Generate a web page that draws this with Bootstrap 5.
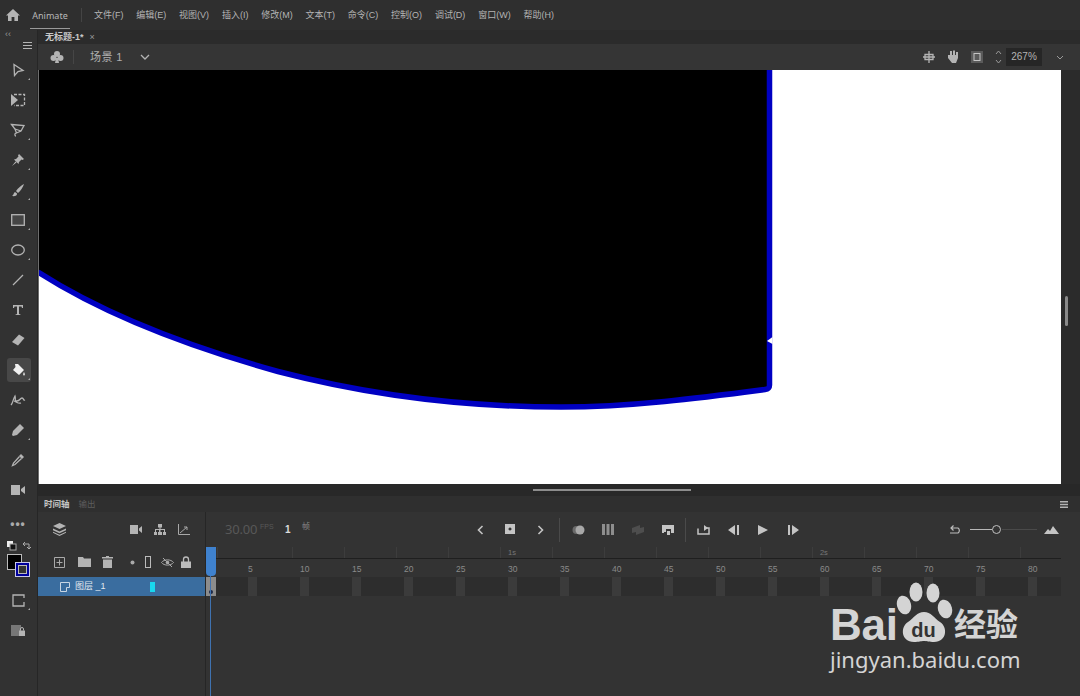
<!DOCTYPE html>
<html lang="zh-CN">
<head>
<meta charset="UTF-8">
<title>Animate</title>
<link href="https://cdn.jsdelivr.net/npm/bootstrap@5.3.3/dist/css/bootstrap.min.css" rel="stylesheet">
<style>
  html, body { height: 100%; }
  body {
    width: 1080px; height: 696px; overflow: hidden; background: #2e2e2e; color: #bdbdbd;
    font-family: "Liberation Sans", "Noto Sans CJK SC", sans-serif; font-size: 10px; line-height: 1;
  }
  svg { display: block; }
  .ico { fill: #b4b4b4; stroke: none; }
  .ico-line { fill: none; stroke: #b4b4b4; stroke-width: 1.3; }

  /* top menu */
  .menu-bar { height: 30px; background: #2f2f2f; padding-left: 5px; flex: none; }
  .app-name { width: 40px; height: 28px; margin: 0 0 0 9px; line-height: 29px; text-align: center; border-bottom: 1px solid #9a9a9a; font-family: "Noto Sans", sans-serif; font-size: 9px; color: #b8b8b8; }
  .menu-sep { width: 1px; height: 14px; background: #444; margin: 0 12px 0 11px; }
  .menu-items { gap: 12.8px; color: #b4b4b4; font-size: 9px; }

  /* left tools */
  .tool-strip { width: 38px; flex: none; background: #323232; border-right: 1px solid #262626; }
  .tool-head { height: 25px; padding: 0 5px; }
  .tool-dots { color: #999; font-size: 9px; }
  .tool-menu { margin-top: 12px; }
  .tool-btn { width: 26px; height: 30px; margin-left: 5px; position: relative; }
  .tool-btn.on::before { content: ""; position: absolute; left: 2px; right: 0; top: 3px; bottom: 3px; border-radius: 3px; background: #484848; }
  .tool-btn svg { position: relative; }
  .tool-btn.more::after { content: ""; position: absolute; right: 1px; bottom: 5px; border: 1.5px solid transparent; border-right-color: #aaa; border-bottom-color: #aaa; }
  .tool-dotrow { color: #aaa; font-size: 12px; font-weight: bold; letter-spacing: 1px; }
  .color-box { width: 32px; height: 44px; margin: 2px 0 0 3px; position: relative; }
  .default-ico { position: absolute; left: 4px; top: 0; }
  .swap-ico { position: absolute; left: 19px; top: 0; }
  .swatch-fill { position: absolute; left: 4px; top: 13px; width: 15px; height: 16px; background: #000; border: 1px solid #bbb; }
  .swatch-stroke { position: absolute; left: 12px; top: 21px; width: 15px; height: 15px; background: #00009c; border: 1px solid #c8c8e8; padding: 2px; }
  .swatch-stroke span { display: block; height: 100%; background: #333; border: 1px solid #bbb; }

  /* tabs + stage bar */
  .work-col { min-width: 0; }
  .tab-row { height: 14px; background: #2b2b2b; padding-left: 7px; color: #c8c8c8; font-size: 9px; font-weight: bold; }
  .tab-x { margin-left: 6px; color: #999; font-weight: normal; }
  .stage-bar { height: 26px; background: #353535; padding-left: 12px; }
  .scene-sep { width: 1px; height: 14px; background: #464646; margin: 0 16px 0 9px; }
  .scene-name { font-size: 11px; color: #b0b0b0; width: 50px; letter-spacing: .4px; }
  .zoom-box { width: 36px; height: 18px; background: #262626; color: #b4b4b4; text-align: center; line-height: 18px; margin-left: 4px; }
  .bar-slot { width: 24px; }
  .zoom-arrows { margin-left: 6px; }
  .zoom-more { margin: 0 16px 0 14px; }

  /* stage */
  .stage-wrap { height: 414px; }
  .stage-art { width: 1023px; height: 414px; background: #fff; }
  .stage-gutter { width: 19px; background: #2b2b2b; padding: 226px 0 0 4px; }
  .stage-thumb { width: 3px; height: 30px; background: #8a8a8a; border-radius: 2px; }

  /* timeline */
  .grip-row { height: 12px; background: #282828; padding-top: 5px; }
  .grip-pill { width: 158px; height: 2px; background: #8d8d8d; margin-left: 495px; }
  .tl-tabs { height: 16px; background: #2f2f2f; padding: 0 12px 0 6px; font-size: 8.5px; color: #c4c4c4; font-weight: bold; }
  .tl-tabs .off { color: #5d5d5d; margin-left: 9px; font-weight: normal; }
  .tl-body { flex: 1; background: #333; position: relative; }
  .layers-pane { width: 168px; border-right: 1px solid #262626; flex: none; }
  .pane-top { height: 35px; padding: 0 9px 0 15px; }
  .pane-tools { height: 30px; padding-left: 16px; }
  .slot { width: 24px; }
  .slot-a { width: 19px; }
  .slot-b { width: 16px; }
  .slot-c { width: 20px; }
  .layer-row { height: 19px; background: #3a6d9f; color: #e2e8ee; padding-left: 22px; font-size: 9px; }
  .layer-ico { margin-right: 5px; }
  .layer-mark { width: 5px; height: 10px; background: #19d8ef; margin-left: 44px; }
  .tl-main { flex: 1; min-width: 0; }
  .ctl-row { height: 35px; padding-right: 21px; }
  .fps-num { width: 35px; margin-left: 19px; color: #585858; font-size: 13px; letter-spacing: -.2px; font-family: "Noto Sans", sans-serif; }
  .fps-unit { width: 25px; color: #585858; font-size: 7px; padding-bottom: 6px; }
  .frame-no { width: 17px; color: #dcdcdc; font-weight: bold; font-size: 10px; }
  .frame-unit { width: 163px; font-size: 8px; color: #888; padding-bottom: 6px; }
  .ctl-btn { width: 30px; }
  .ctl-sep { width: 1px; height: 24px; background: #4a4a4a; margin: 0 3px 0 4px; }
  .ctl-sep.two { margin: 0 2px 0 2px; }
  .zoom-track { width: 67px; height: 10px; position: relative; margin: 0 7px 0 8px; }
  .zoom-track::before { content: ""; position: absolute; left: 0; top: 4px; width: 22px; height: 1px; background: #b8b8b8; }
  .zoom-track::after { content: ""; position: absolute; left: 32px; top: 4px; width: 35px; height: 1px; background: #4a4a4a; }
  .zoom-knob { position: absolute; left: 22px; top: 0; width: 9px; height: 9px; border: 1.5px solid #c0c0c0; border-radius: 50%; }

  .ruler-sec { height: 11px; margin-right: 19px; padding-left: 302px; color: #777; font-size: 7.5px; gap: 304px; background: repeating-linear-gradient(90deg, transparent 0 51px, #3d3d3d 51px 52px); background-position: 35px 0; }
  .ruler-frames { height: 19px; margin-right: 19px; border-top: 1px solid #1f1f1f; padding: 6px 0 0 42px; color: #8a8a8a; font-size: 8.5px; overflow: hidden; }
  .ruler-frames span, .track-cell { width: 52px; flex: none; }
  .track { height: 19px; margin-right: 19px; background: #2d2d2d; overflow: hidden; }
  .track-first { width: 10px; background: #8c8c8c; flex: none; position: relative; }
  .track-first::after { content: ""; position: absolute; left: 3px; bottom: 2px; width: 4px; height: 4px; border-radius: 50%; background: #1c2a4a; }
  .track-gap { width: 32px; flex: none; }
  .track-key { display: block; width: 9px; height: 100%; background: #3b3b3b; }

  /* playhead lies over the ruler and the track */
  .play-flag { position: absolute; left: 168px; top: 35px; width: 10px; height: 29px; background: #3f82cf; border-radius: 0 0 4px 4px; }
  .play-line { position: absolute; left: 172px; top: 64px; bottom: 0; width: 1px; background: #3f72b0; }

  /* watermark */
  .mark-wrap { position: absolute; left: 830px; top: 581px; width: 195px; color: #d4d4d4; }
  .mark-top { height: 67px; }
  .mark-bai { font-size: 44px; font-weight: bold; line-height: 40px; margin-top: 24px; letter-spacing: -.2px; width: 66px; }
  .mark-logo { flex: none; margin-left: -1px; }
  .mark-zh { font-family: "Noto Sans CJK SC", sans-serif; font-size: 32px; font-weight: bold; line-height: 1; margin: 25px 0 0 1px; white-space: nowrap; }
  .mark-url { font-family: "Noto Sans", sans-serif; font-size: 22px; line-height: 1; white-space: nowrap; }
</style>
</head>
<body class="d-flex flex-column">

  <!-- menu -->
  <div class="menu-bar d-flex align-items-center">
    <svg width="16" height="14" viewBox="0 0 16 14" class="ico"><path d="M8 1 1 7.500h2V13h3.600V9h2.800v4H13V7.500h2z"/></svg>
    <div class="app-name">Animate</div>
    <div class="menu-sep"></div>
    <div class="d-flex menu-items">
      <span>文件(F)</span><span>编辑(E)</span><span>视图(V)</span><span>插入(I)</span><span>修改(M)</span><span>文本(T)</span><span>命令(C)</span><span>控制(O)</span><span>调试(D)</span><span>窗口(W)</span><span>帮助(H)</span>
    </div>
  </div>

  <div class="d-flex flex-grow-1">
    <!-- tools -->
    <div class="tool-strip">
      <div class="tool-head d-flex justify-content-between">
        <span class="tool-dots">‹‹</span>
        <svg class="ico tool-menu" width="9" height="7" viewBox="0 0 9 7"><path d="M0 0h9v1H0zM0 3h9v1H0zM0 6h9v1H0z"/></svg>
      </div>
      <div class="tool-btn more d-flex align-items-center justify-content-center"><svg width="14" height="14" viewBox="0 0 14 14" class="ico-line"><path d="M3 1.500 12 7.500 7 8.500 3.500 12.500z"/></svg></div>
      <div class="tool-btn d-flex align-items-center justify-content-center"><svg width="16" height="14" viewBox="0 0 16 14"><path class="ico-line" stroke-dasharray="3 1.500" d="M4 1.500h10.500v11H4"/><path class="ico" d="M1 1 8 7 1 13z"/></svg></div>
      <div class="tool-btn more d-flex align-items-center justify-content-center"><svg width="16" height="16" viewBox="0 0 16 16" class="ico-line"><path d="M1.500 2.500 14 3.500 11 9 6.500 11 5 7z"/><path d="M5 7 11 9M6 11c-2 1-1 3 0 3"/></svg></div>
      <div class="tool-btn more d-flex align-items-center justify-content-center"><svg width="14" height="14" viewBox="0 0 14 14" class="ico"><path d="M8 1 13 6 11.500 7 10.500 6.500 8 9 7.500 11 3 6.500 5 6 7.500 3.500 7 2.500zM4.500 8.500 1 13 5.500 9.500z"/></svg></div>
      <div class="tool-btn more d-flex align-items-center justify-content-center"><svg width="14" height="14" viewBox="0 0 14 14" class="ico"><path d="M13 1C11 2 7 5 5 8L7 10C9.500 8 12 4 13 1zM4 9C2.500 9.500 3 12 1 13 4 13.500 6.500 12.500 6 10.500z"/></svg></div>
      <div class="tool-btn more d-flex align-items-center justify-content-center"><svg width="14" height="12" viewBox="0 0 14 12"><rect class="ico-line" x=".7" y=".7" width="12.600" height="10.600" style="fill:#454545"/></svg></div>
      <div class="tool-btn more d-flex align-items-center justify-content-center"><svg width="14" height="12" viewBox="0 0 14 12"><ellipse class="ico-line" cx="7" cy="6" rx="6.300" ry="5"/></svg></div>
      <div class="tool-btn d-flex align-items-center justify-content-center"><svg width="12" height="12" viewBox="0 0 12 12" class="ico-line"><path d="M1 11 11 1"/></svg></div>
      <div class="tool-btn d-flex align-items-center justify-content-center"><svg width="12" height="12" viewBox="0 0 12 12" class="ico"><path d="M1 1h10v3h-1L9.500 2.500H7V10l1.500.5V11h-5v-.5L5 10V2.500H2.500L2 4H1z"/></svg></div>
      <div class="tool-btn d-flex align-items-center justify-content-center"><svg width="14" height="12" viewBox="0 0 14 12" class="ico"><path d="M8 .5 13.500 4 7 11.500 1 8z"/></svg></div>
      <div class="tool-btn on more d-flex align-items-center justify-content-center"><svg width="15" height="15" viewBox="0 0 15 15"><path fill="#f0f0f0" d="M4 1h3l6 6-5 5-6-5 2.500-3z"/><path fill="#f0f0f0" d="M13 9c1 1.500 1.200 3.500 0 3.500s-1-2 0-3.500z"/></svg></div>
      <div class="tool-btn d-flex align-items-center justify-content-center"><svg width="16" height="12" viewBox="0 0 16 12" class="ico-line"><path d="M1 11C3 9 3 5 5 2 6 5 4 7 7 7s3-3 5-3 1 3 3 2M4 7c3 1 4 3 7 2"/></svg></div>
      <div class="tool-btn more d-flex align-items-center justify-content-center"><svg width="14" height="14" viewBox="0 0 14 14" class="ico"><path d="M9 1 13 5 6 12 2 13 1 12 2 8z"/></svg></div>
      <div class="tool-btn d-flex align-items-center justify-content-center"><svg width="14" height="14" viewBox="0 0 14 14"><path class="ico" d="M10 1 13 4 11 6 8 3z"/><path class="ico-line" d="M8.500 3.500 2.500 10 1.500 12.500 4 11.500 10.500 5.500"/></svg></div>
      <div class="tool-btn d-flex align-items-center justify-content-center"><svg width="14" height="10" viewBox="0 0 14 10" class="ico"><path d="M0 0h9v10H0zM10 4l4-3v8l-4-3z"/></svg></div>
      <div class="tool-btn tool-dotrow d-flex align-items-center justify-content-center mt-1">•••</div>
      <div class="color-box">
        <svg class="default-ico" width="10" height="10" viewBox="0 0 10 10"><rect width="6" height="6" fill="#eee"/><rect x="3" y="3" width="6" height="6" fill="#111" stroke="#aaa"/></svg>
        <svg class="swap-ico" width="10" height="10" viewBox="0 0 10 10"><path d="M1 3h6v5M5 6l2 2 2-2M3 1 1 3l2 2" fill="none" stroke="#aaa"/></svg>
        <div class="swatch-fill"></div>
        <div class="swatch-stroke"><span></span></div>
      </div>
      <div class="tool-btn more d-flex align-items-center justify-content-center"><svg width="13" height="13" viewBox="0 0 13 13" class="ico-line"><path d="M12 4V1H1v11h11V8"/></svg></div>
      <div class="tool-btn d-flex align-items-center justify-content-center"><svg width="16" height="13" viewBox="0 0 16 13"><rect x="1" y="1" width="10" height="11" fill="#777"/><rect class="ico" x="9" y="6.500" width="6" height="5.500"/><path d="M10.500 6.500V5a1.500 1.500 0 0 1 3 0v1.500" fill="none" stroke="#b4b4b4"/></svg></div>
    </div>

    <div class="work-col flex-grow-1 d-flex flex-column">
      <div class="tab-row d-flex align-items-center"><span>无标题-1*</span><span class="tab-x">×</span></div>

      <div class="stage-bar d-flex align-items-center">
        <svg width="14" height="14" viewBox="0 0 14 14" class="ico"><circle cx="7" cy="4" r="3"/><circle cx="3.500" cy="8" r="3"/><circle cx="10.500" cy="8" r="3"/><path d="M6 8h2l1 5H5z"/></svg>
        <div class="scene-sep"></div>
        <span class="scene-name">场景 1</span>
        <svg width="10" height="6" viewBox="0 0 10 6" class="ico-line"><path d="M1 1 5 5 9 1"/></svg>
        <div class="ms-auto d-flex align-items-center">
          <div class="bar-slot"><svg width="12" height="12" viewBox="0 0 12 12" class="ico-line mx-auto"><path d="M6 0v12M2 3.500h8v5H2zM0 6h12"/></svg></div>
          <div class="bar-slot"><svg width="13" height="14" viewBox="0 0 13 14" class="ico mx-auto"><path d="M3 1h2v4h1V.5h2V5h1V2h2v6l-2 5H5L1 8V5h2z"/></svg></div>
          <div class="bar-slot"><svg width="12" height="12" viewBox="0 0 12 12" class="mx-auto"><rect width="12" height="12" fill="#5a5a5a"/><rect x="3" y="2.500" width="6" height="7" fill="none" stroke="#c4c4c4"/></svg></div>
          <svg class="zoom-arrows" width="7" height="16" viewBox="0 0 7 16"><path d="M1 5 3.500 2 6 5M1 11l2.500 3L6 11" fill="none" stroke="#999"/></svg>
          <div class="zoom-box">267%</div>
          <svg class="zoom-more" width="8" height="5" viewBox="0 0 8 5"><path d="M1 1 4 4 7 1" fill="none" stroke="#999"/></svg>
        </div>
      </div>

      <!-- stage -->
      <div class="stage-wrap d-flex">
        <div class="stage-art">
          <svg width="1023" height="414" viewBox="38 70 1023 414">
            <path fill="#000" d="M38 70H769V389H765C700 398 630 407 561 407 470 407 372 396 278 371.500 190 347 105 315 38 272z"/>
            <path fill="none" stroke="#0000c2" stroke-width="5.500" d="M38 272C105 315 190 347 278 371.500 372 396 470 407 561 407 630 407 700 398 765 389.500 768.500 389 769.500 388 769.500 385V70"/>
            <path fill="#fff" d="M772.500 337 767 341 772.500 344z"/>
            <path fill="none" stroke="#6e6e6e" d="M38.500 70V484"/>
          </svg>
        </div>
        <div class="stage-gutter"><div class="stage-thumb"></div></div>
      </div>

      <!-- timeline -->
      <div class="grip-row"><div class="grip-pill"></div></div>
      <div class="tl-tabs d-flex align-items-center">
        <span>时间轴</span><span class="off">输出</span>
        <svg class="ms-auto ico" width="8" height="7" viewBox="0 0 8 7"><path d="M0 0h8v1.500H0zM0 2.700h8v1.500H0zM0 5.400h8v1.600H0z"/></svg>
      </div>
      <div class="tl-body d-flex">
        <div class="layers-pane">
          <div class="pane-top d-flex align-items-center">
            <svg width="13" height="13" viewBox="0 0 13 13" class="ico"><path d="M6.500 0 13 3 6.500 6 0 3zM0 5.500l6.500 3 6.500-3v1.700l-6.500 3-6.500-3zM0 8.800l6.500 3 6.500-3v1l-6.500 3.200L0 9.800z"/></svg>
            <div class="ms-auto d-flex align-items-center">
              <div class="slot"><svg class="mx-auto ico" width="12" height="9" viewBox="0 0 12 9"><path d="M0 0h8v9H0zM9 3.500 12 1v7L9 5.500z"/></svg></div>
              <div class="slot"><svg class="mx-auto ico" width="12" height="11" viewBox="0 0 12 11"><path d="M4 0h4v3.500H6.500V5H11v3h1v3H9V8h1V6H6.500v2H8v3H4V8h1V6H2v2h1v3H0V8h1V5h4.500V3.500H4z"/></svg></div>
              <div class="slot"><svg class="mx-auto" width="12" height="11" viewBox="0 0 12 11"><path fill="none" stroke="#a8a8a8" d="M.5 0v10.500H12M2 9 9 3M6 3h3v3"/></svg></div>
            </div>
          </div>
          <div class="pane-tools d-flex align-items-center">
            <div class="slot"><svg width="11" height="11" viewBox="0 0 11 11"><path fill="none" stroke="#aaa" d="M.5.500h10v10H.500zM5.500 2.500v6M2.500 5.500h6"/></svg></div>
            <div class="slot"><svg width="13" height="10" viewBox="0 0 13 10" class="ico"><path d="M0 0h5l1 1.500h7V10H0z"/></svg></div>
            <div class="slot"><svg width="11" height="12" viewBox="0 0 11 12" class="ico"><path d="M4 0h3v1h4v1.500H0V1h4zM1 3.500h9V12H1z"/></svg></div>
            <div class="slot-a"><svg class="ms-1" width="5" height="5" viewBox="0 0 5 5"><circle cx="2.500" cy="2.500" r="2" fill="#aaa"/></svg></div>
            <div class="slot-b"><svg width="6" height="12" viewBox="0 0 6 12"><rect x=".5" y=".5" width="5" height="11" fill="none" stroke="#bbb"/></svg></div>
            <div class="slot-c"><svg width="13" height="11" viewBox="0 0 13 11"><path fill="none" stroke="#aaa" d="M.5 5.500C3 2 10 2 12.500 5.500 10 9 3 9 .5 5.500zM2 1l9 9"/><circle cx="6.500" cy="5.500" r="1.800" fill="#aaa"/></svg></div>
            <div class="slot"><svg width="10" height="12" viewBox="0 0 10 12"><path fill="none" stroke="#bbb" stroke-width="1.300" d="M2.500 6V3.500a2.500 2.500 0 0 1 5 0V6"/><rect y="5.500" width="10" height="6.500" fill="#bbb"/></svg></div>
          </div>
          <div class="layer-row d-flex align-items-center">
            <svg class="layer-ico" width="10" height="10" viewBox="0 0 10 10"><path fill="none" stroke="#c8d6e4" d="M.5.500h9v5H6.500V9.500H.5z"/></svg>
            <span>图层 _1</span>
            <div class="layer-mark"></div>
          </div>
        </div>

        <div class="tl-main">
          <div class="ctl-row d-flex align-items-center">
            <span class="fps-num">30.00</span><span class="fps-unit">FPS</span>
            <span class="frame-no">1</span><span class="frame-unit">帧</span>
            <div class="ctl-btn"><svg class="mx-auto" width="7" height="10" viewBox="0 0 7 10"><path fill="none" stroke="#c4c4c4" stroke-width="1.600" d="M5.500 1 1.500 5l4 4"/></svg></div>
            <div class="ctl-btn"><svg class="mx-auto" width="11" height="11" viewBox="0 0 11 11"><path fill="#c4c4c4" fill-rule="evenodd" d="M0 0h10v10H0zM5 3.500a1.500 1.500 0 1 0 .01 0z"/></svg></div>
            <div class="ctl-btn"><svg class="mx-auto" width="7" height="10" viewBox="0 0 7 10"><path fill="none" stroke="#c4c4c4" stroke-width="1.600" d="M1.500 1l4 4-4 4"/></svg></div>
            <div class="ctl-sep"></div>
            <div class="ctl-btn"><svg class="mx-auto" width="13" height="10" viewBox="0 0 13 10"><circle cx="4.500" cy="5" r="4" fill="#6a6a6a"/><circle cx="8" cy="5" r="4.500" fill="#a8a8a8"/></svg></div>
            <div class="ctl-btn"><svg class="mx-auto" width="12" height="11" viewBox="0 0 12 11"><path fill="#8e8e8e" d="M0 0h3v11H0zM4.500 0h3v11h-3zM9 0h3v11H9z"/></svg></div>
            <div class="ctl-btn"><svg class="mx-auto" width="12" height="10" viewBox="0 0 12 10"><path fill="#4e4e4e" d="M0 3 8 0v3l4-1v5L4 10V7L0 8z"/></svg></div>
            <div class="ctl-btn"><svg class="mx-auto" width="12" height="10" viewBox="0 0 12 10"><path fill="#c4c4c4" fill-rule="evenodd" d="M0 0h12v8H9V4H4v3L2 7v1H0zM5 6h3v4H5z"/></svg></div>
            <div class="ctl-sep two"></div>
            <div class="ctl-btn"><svg class="mx-auto" width="13" height="11" viewBox="0 0 13 11"><path fill="none" stroke="#c4c4c4" stroke-width="1.500" d="M1 4.500V10h11V4H7"/><path fill="#c4c4c4" d="M7 1v6L11 4z"/></svg></div>
            <div class="ctl-btn"><svg class="mx-auto" width="11" height="10" viewBox="0 0 11 10"><path fill="#c4c4c4" d="M7 0v10L0 5zM9 0h2v10H9z"/></svg></div>
            <div class="ctl-btn"><svg class="mx-auto" width="10" height="10" viewBox="0 0 10 10"><path fill="#c4c4c4" d="M0 0 10 5 0 10z"/></svg></div>
            <div class="ctl-btn"><svg class="mx-auto" width="11" height="10" viewBox="0 0 11 10"><path fill="#c4c4c4" d="M4 0v10l7-5zM0 0h2v10H0z"/></svg></div>
            <div class="ms-auto d-flex align-items-center">
              <svg width="13" height="10" viewBox="0 0 13 10"><path fill="none" stroke="#bdbdbd" stroke-width="1.200" d="M2 3h7a3 3 0 0 1 0 5H1M4.500.500 2 3l2.500 2.500"/></svg>
              <div class="zoom-track"><div class="zoom-knob"></div></div>
              <svg width="15" height="8" viewBox="0 0 15 8"><path fill="#c4c4c4" d="M0 8 4 3l2 2 3-5 6 8z"/></svg>
            </div>
          </div>
          <div class="ruler-sec d-flex align-items-center"><span>1s</span><span>2s</span></div>
          <div class="ruler-frames d-flex" id="ruler"></div>
          <div class="track d-flex" id="track"></div>
        </div>

        <div class="play-flag"></div>
        <div class="play-line"></div>
      </div>
    </div>
  </div>

  <!-- watermark -->
  <div class="mark-wrap">
    <div class="mark-top d-flex">
      <div class="mark-bai">Bai</div>
      <svg class="mark-logo" width="58" height="66" viewBox="0 0 58 66">
        <g fill="#d4d4d4">
          <ellipse cx="21" cy="11" rx="6.500" ry="9.500"/>
          <ellipse cx="38" cy="12" rx="6.500" ry="9.500"/>
          <ellipse cx="9" cy="24" rx="7" ry="9.500" transform="rotate(-15 9 24)"/>
          <ellipse cx="50" cy="28" rx="7" ry="9.500" transform="rotate(-15 50 28)"/>
          <path d="M29 31C36 31 39 37 45 41 53 46 52 61 39 61 34 61 32 60 29 60 26 60 24 61 19 61 6 61 5 46 13 41 19 37 22 31 29 31z"/>
        </g>
        <text x="28.500" y="56" text-anchor="middle" fill="#333" font-family="Liberation Sans" font-size="20" font-weight="bold">du</text>
      </svg>
      <div class="mark-zh">经验</div>
    </div>
    <div class="mark-url">jingyan.baidu.com</div>
  </div>

  <script>
    // ruler labels and track cells repeat every 5 frames
    const ruler = document.getElementById("ruler");
    const track = document.getElementById("track");
    track.innerHTML = '<div class="track-first"></div><div class="track-gap"></div>';
    for (let f = 5; f <= 80; f += 5) {
      ruler.insertAdjacentHTML("beforeend", "<span>" + f + "</span>");
      track.insertAdjacentHTML("beforeend", '<div class="track-cell"><i class="track-key"></i></div>');
    }
  </script>
</body>
</html>
